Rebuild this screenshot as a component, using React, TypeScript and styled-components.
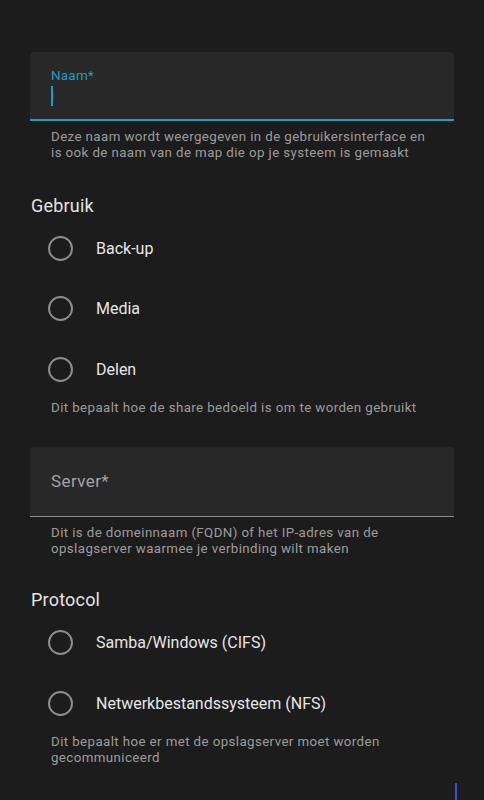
import styled, { createGlobalStyle } from 'styled-components'

const GlobalStyle = createGlobalStyle`
  html, body {
    margin: 0;
    padding: 0;
    background: #1c1c1c;
  }
  body {
    font-family: Roboto, "Noto Sans", sans-serif;
    -webkit-font-smoothing: antialiased;
  }
`

const Page = styled.div`
  box-sizing: border-box;
  height: 800px;
  overflow: hidden;
  padding: 52px 30px 0;
  background: #1c1c1c;
`

const Field = styled.div<{ $focused?: boolean; $gap?: number }>`
  box-sizing: border-box;
  margin-top: ${(p) => p.$gap ?? 0}px;
  height: ${(p) => (p.$focused ? '69px' : '70px')};
  background: #282828;
  border-radius: 4px 4px 0 0;
  border-bottom: ${(p) => (p.$focused ? '2px solid #1f9bc4' : '1px solid #8e8e8e')};
  padding: 0 21px;
  display: flex;
  flex-direction: column;
  justify-content: center;
`

const FloatingLabel = styled.div`
  font-size: 13.5px;
  line-height: 16px;
  color: #1f9bc4;
  letter-spacing: 0.2px;
  margin-top: 2px;
`

const Caret = styled.div`
  width: 2px;
  height: 20px;
  margin-top: 3px;
  background: #1f9bc4;
`

const PlaceholderLabel = styled.div`
  font-size: 17px;
  line-height: 24px;
  color: #a3a3a3;
  letter-spacing: 0.4px;
`

const Helper = styled.p<{ $gap?: number }>`
  margin: ${(p) => p.$gap ?? 8}px 0 0;
  padding: 0 21px;
  font-size: 13.3px;
  line-height: 16px;
  letter-spacing: 0.4px;
  color: #9c9c9c;
`

const SectionTitle = styled.h3<{ $gap: number }>`
  margin: ${(p) => p.$gap}px 0 0;
  padding-left: 1px;
  font-size: 18px;
  line-height: 24px;
  font-weight: 400;
  letter-spacing: 0.2px;
  color: #e3e3e3;
`

const RadioList = styled.div<{ $gap?: number }>`
  margin-top: ${(p) => p.$gap ?? 0}px;
  display: flex;
  flex-direction: column;
`

const RadioRow = styled.label`
  height: 60.5px;
  display: flex;
  align-items: center;
  gap: 23px;
  padding-left: 18px;
  cursor: pointer;
`

const RadioCircle = styled.span`
  box-sizing: border-box;
  width: 25px;
  height: 25px;
  border-radius: 50%;
  border: 2px solid #8d8d8d;
  flex: none;
`

const RadioText = styled.span`
  font-size: 16px;
  letter-spacing: 0;
  color: #e6e6e6;
`

const Footer = styled.div`
  margin: 17px -30px 0 0;
  padding-right: 27px;
  display: flex;
  justify-content: flex-end;
`

const ScrollMark = styled.div`
  width: 2px;
  height: 30px;
  background: #2f58d2;
`

const Radio = ({ label }: { label: string }) => (
  <RadioRow>
    <RadioCircle />
    <RadioText>{label}</RadioText>
  </RadioRow>
)

const App = () => {
  return (
    <>
      <GlobalStyle />
      <Page>
        <Field $focused>
          <FloatingLabel>Naam*</FloatingLabel>
          <Caret />
        </Field>
        <Helper>
          Deze naam wordt weergegeven in de gebruikersinterface en is ook de naam van de map die op je systeem is gemaakt
        </Helper>

        <SectionTitle $gap={33}>Gebruik</SectionTitle>
        <RadioList>
          <Radio label="Back-up" />
          <Radio label="Media" />
          <Radio label="Delen" />
        </RadioList>
        <Helper $gap={0}>Dit bepaalt hoe de share bedoeld is om te worden gebruikt</Helper>

        <Field $gap={31}>
          <PlaceholderLabel>Server*</PlaceholderLabel>
        </Field>
        <Helper>
          Dit is de domeinnaam (FQDN) of het IP-adres van de opslagserver waarmee je verbinding wilt maken
        </Helper>

        <SectionTitle $gap={31}>Protocol</SectionTitle>
        <RadioList $gap={1}>
          <Radio label="Samba/Windows (CIFS)" />
          <Radio label="Netwerkbestandssysteem (NFS)" />
        </RadioList>
        <Helper $gap={0}>Dit bepaalt hoe er met de opslagserver moet worden gecommuniceerd</Helper>

        <Footer>
          <ScrollMark />
        </Footer>
      </Page>
    </>
  )
}

export default App
